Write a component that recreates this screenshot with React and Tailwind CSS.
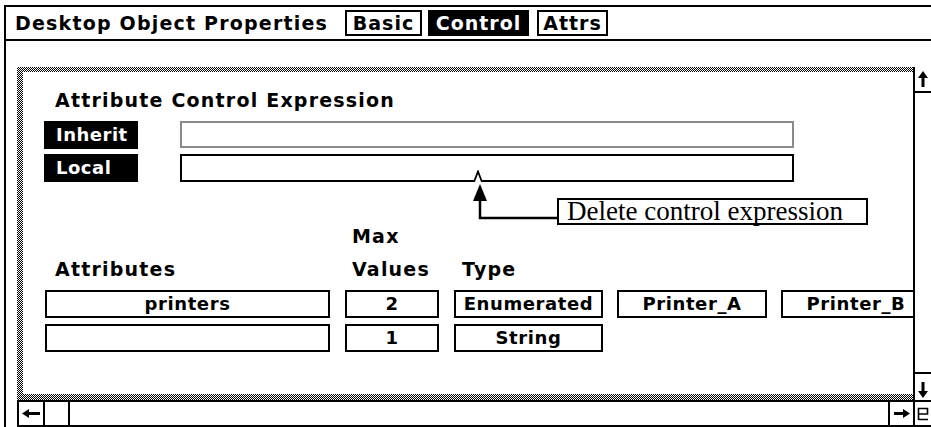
const dither =
  "bg-[image:repeating-conic-gradient(#000_0%_25%,#fff_0%_50%)] bg-[length:2px_2px]";
const ui = "font-['DejaVu_Sans',Verdana,sans-serif] font-bold";

function UpArrow() {
  return (
    <svg width="10" height="16" viewBox="0 0 10 16">
      <path d="M5 0 L10 7 H6.5 V16 H3.5 V7 H0 Z" fill="black" />
    </svg>
  );
}
function DownArrow() {
  return (
    <svg width="10" height="16" viewBox="0 0 10 16">
      <path d="M5 16 L10 9 H6.5 V0 H3.5 V9 H0 Z" fill="black" />
    </svg>
  );
}
function LeftArrow() {
  return (
    <svg width="18" height="9" viewBox="0 0 18 9">
      <path d="M0 4.5 L7 0 V3 H18 V6 H7 V9 Z" fill="black" />
    </svg>
  );
}
function RightArrow() {
  return (
    <svg width="16" height="9" viewBox="0 0 16 9">
      <path d="M16 4.5 L9 0 V3 H0 V6 H9 V9 Z" fill="black" />
    </svg>
  );
}
function Corner() {
  return (
    <svg width="12" height="14" viewBox="0 0 12 14">
      <path
        d="M1.5 13 V1.5 H10.5 V7 H1.5 M1.5 12.5 H11"
        fill="none"
        stroke="black"
        strokeWidth="1.6"
      />
    </svg>
  );
}

function Box({ w, ml = "", children }) {
  return (
    <div
      className={`${w} ${ml} h-[28px] border-2 border-black bg-white flex items-center justify-center text-[18px] tracking-[0.6px] leading-none overflow-hidden whitespace-nowrap`}
    >
      {children}
    </div>
  );
}

export default function App() {
  return (
    <div className={`w-[931px] h-[427px] bg-white overflow-hidden relative text-black ${ui}`}>
      <div className="mt-[5px] ml-[4px] h-[422px] border-t-2 border-l-2 border-black flex flex-col">
        {/* Title bar */}
        <div className="h-[34px] shrink-0 border-b-2 border-black flex items-center pl-[9px]">
          <div className="w-[330px] text-[19px] leading-[20px] tracking-[1.2px] whitespace-nowrap">
            Desktop Object Properties
          </div>
          <div className="w-[77px] h-[26px] border-2 border-black flex items-center justify-center text-[19px] leading-none tracking-[1px]">
            Basic
          </div>
          <div className="ml-[6px] w-[101px] h-[26px] bg-black text-white flex items-center justify-center text-[19px] leading-none tracking-[1px]">
            Control
          </div>
          <div className="ml-[8px] w-[71px] h-[26px] border-2 border-black flex items-center justify-center text-[19px] leading-none tracking-[1px]">
            Attrs
          </div>
        </div>
        {/* message row */}
        <div className="h-[26px] shrink-0" />
        {/* main */}
        <div className="flex-1 flex flex-row">
          <div className="w-[11px] shrink-0" />
          <div className="w-[896px] shrink-0 flex flex-col">
            <div className={`h-[333px] shrink-0 pt-[5px] pl-[6px] pb-[6px] ${dither}`}>
              <div className="h-full bg-white overflow-hidden flex flex-col">
                <div className="mt-[18px] ml-[32px] h-[21px] text-[19px] leading-[21px] tracking-[1.2px] whitespace-nowrap">
                  Attribute Control Expression
                </div>
                <div className="mt-[10px] ml-[21px] flex items-start h-[28px]">
                  <div className="w-[94px] h-[28px] bg-black text-white text-[18px] leading-none tracking-[0.5px] pl-[12px] flex items-center">
                    Inherit
                  </div>
                  <div className="ml-[42px] w-[614px] h-[27px] border-2 border-[#8a8a8a]" />
                </div>
                <div className="mt-[5px] ml-[21px] flex items-start h-[28px]">
                  <div className="w-[94px] h-[28px] bg-black text-white text-[18px] leading-none tracking-[0.5px] pl-[12px] flex items-center">
                    Local
                  </div>
                  <div className="ml-[42px] w-[614px] h-[28px] border-2 border-black" />
                </div>
                <div className="mt-[44px] ml-[322px] h-[21px] pl-[7px] text-[19px] leading-[21px] tracking-[1.2px]">
                  Max
                </div>
                <div className="mt-[12px] ml-[22px] h-[21px] flex text-[19px] leading-[21px] tracking-[1.2px]">
                  <div className="w-[285px] pl-[10px]">Attributes</div>
                  <div className="ml-[15px] w-[94px] pl-[7px]">Values</div>
                  <div className="ml-[15px] w-[149px] pl-[8px]">Type</div>
                </div>
                <div className="mt-[10px] ml-[22px] flex">
                  <Box w="w-[285px] shrink-0">printers</Box>
                  <Box w="w-[94px] shrink-0" ml="ml-[15px]">2</Box>
                  <Box w="w-[149px] shrink-0" ml="ml-[15px]">Enumerated</Box>
                  <Box w="w-[150px] shrink-0" ml="ml-[14px]">Printer_A</Box>
                  <Box w="w-[150px] shrink-0" ml="ml-[14px]">Printer_B</Box>
                </div>
                <div className="mt-[6px] ml-[22px] flex">
                  <Box w="w-[285px] shrink-0"></Box>
                  <Box w="w-[94px] shrink-0" ml="ml-[15px]">1</Box>
                  <Box w="w-[149px] shrink-0" ml="ml-[15px]">String</Box>
                </div>
              </div>
            </div>
            {/* horizontal scrollbar */}
            <div className="h-[27px] shrink-0 border-t-2 border-b-2 border-l-2 border-black flex">
              <div className="w-[26px] border-r-2 border-black flex items-center justify-center">
                <LeftArrow />
              </div>
              <div className="w-[25px] border-r-2 border-black" />
              <div className="flex-1" />
              <div className="w-[25px] border-l-2 border-black flex items-center justify-center">
                <RightArrow />
              </div>
            </div>
          </div>
          {/* vertical scrollbar */}
          <div className="w-[18px] shrink-0 border-l-2 border-black flex flex-col">
            <div className="h-[26px] shrink-0 border-b-2 border-black flex items-center justify-center">
              <UpArrow />
            </div>
            <div className="flex-1" />
            <div className="h-[28px] shrink-0 border-t-2 border-black flex items-end justify-center pb-[2px]">
              <DownArrow />
            </div>
            <div className="h-[27px] shrink-0 border-t-2 border-b-2 border-black flex items-center justify-center">
              <Corner />
            </div>
          </div>
        </div>
      </div>

      {/* annotation overlay */}
      <svg className="absolute left-[472px] top-[170px]" width="12" height="12" viewBox="0 0 12 12">
        <polyline points="2,12 6,1.5 10,12" fill="white" stroke="black" strokeWidth="1.8" />
      </svg>
      <svg className="absolute left-[470px] top-[182px]" width="90" height="40" viewBox="0 0 90 40">
        <path d="M10 14 V36 H88" fill="none" stroke="black" strokeWidth="2.5" />
        <polygon points="3,19 10,2 17,19" fill="black" />
      </svg>
      <div className="absolute left-[557px] top-[198px] w-[311px] h-[27px] border-2 border-black bg-white flex items-center pl-[8px] font-normal font-['Liberation_Serif','Times_New_Roman',serif] text-[27px] leading-none tracking-normal whitespace-nowrap">
        Delete control expression
      </div>
    </div>
  );
}
